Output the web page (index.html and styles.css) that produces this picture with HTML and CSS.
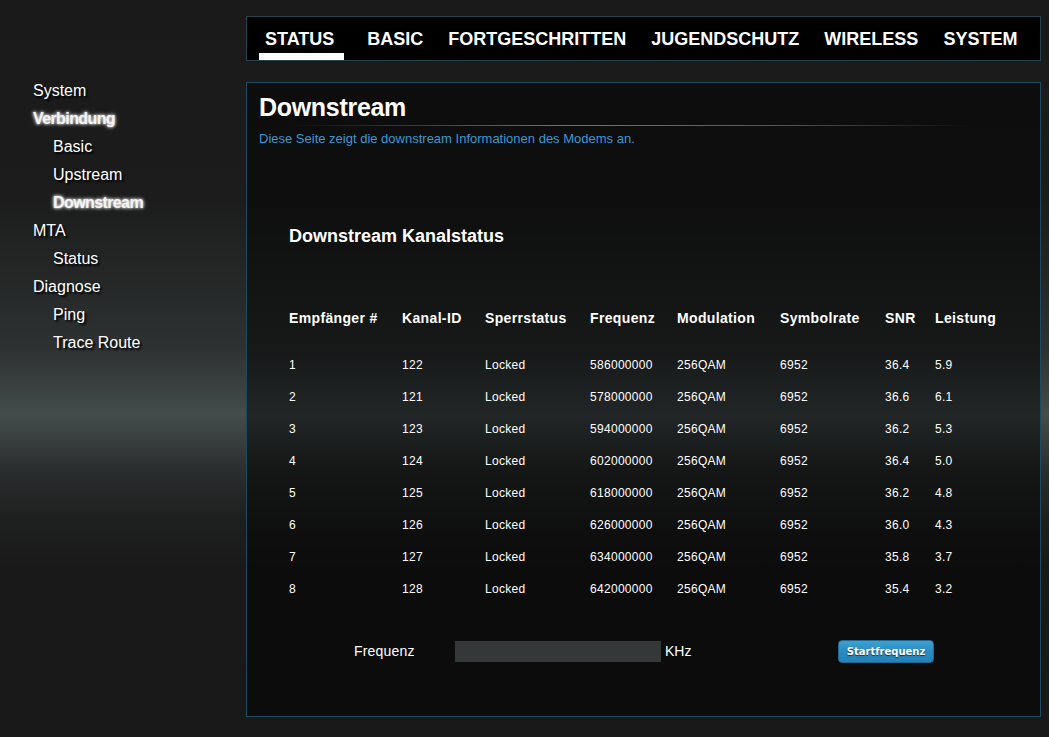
FILE: index.html
```html
<!DOCTYPE html>
<html lang="de">
<head>
<meta charset="utf-8">
<title>Downstream</title>
<link rel="stylesheet" href="styles.css">
</head>
<body>
<div class="page">
  <aside class="sidebar">
    <ul class="menu">
      <li class="lvl1">System</li>
      <li class="lvl1 active">Verbindung</li>
      <li class="lvl2">Basic</li>
      <li class="lvl2">Upstream</li>
      <li class="lvl2 active">Downstream</li>
      <li class="lvl1">MTA</li>
      <li class="lvl2">Status</li>
      <li class="lvl1">Diagnose</li>
      <li class="lvl2">Ping</li>
      <li class="lvl2">Trace Route</li>
    </ul>
  </aside>
  <main class="main">
    <nav class="topnav">
      <span class="tab current">STATUS</span>
      <span class="tab">BASIC</span>
      <span class="tab">FORTGESCHRITTEN</span>
      <span class="tab">JUGENDSCHUTZ</span>
      <span class="tab">WIRELESS</span>
      <span class="tab">SYSTEM</span>
    </nav>
    <section class="panel">
      <h1 class="title">Downstream</h1>
      <div class="rule"></div>
      <p class="desc">Diese Seite zeigt die downstream Informationen des Modems an.</p>
      <h2 class="subtitle">Downstream Kanalstatus</h2>
      <table class="chan">
        <thead>
          <tr><th>Empfänger #</th><th>Kanal-ID</th><th>Sperrstatus</th><th>Frequenz</th><th>Modulation</th><th>Symbolrate</th><th>SNR</th><th>Leistung</th></tr>
        </thead>
        <tbody>
          <tr><td>1</td><td>122</td><td>Locked</td><td>586000000</td><td>256QAM</td><td>6952</td><td>36.4</td><td>5.9</td></tr>
          <tr><td>2</td><td>121</td><td>Locked</td><td>578000000</td><td>256QAM</td><td>6952</td><td>36.6</td><td>6.1</td></tr>
          <tr><td>3</td><td>123</td><td>Locked</td><td>594000000</td><td>256QAM</td><td>6952</td><td>36.2</td><td>5.3</td></tr>
          <tr><td>4</td><td>124</td><td>Locked</td><td>602000000</td><td>256QAM</td><td>6952</td><td>36.4</td><td>5.0</td></tr>
          <tr><td>5</td><td>125</td><td>Locked</td><td>618000000</td><td>256QAM</td><td>6952</td><td>36.2</td><td>4.8</td></tr>
          <tr><td>6</td><td>126</td><td>Locked</td><td>626000000</td><td>256QAM</td><td>6952</td><td>36.0</td><td>4.3</td></tr>
          <tr><td>7</td><td>127</td><td>Locked</td><td>634000000</td><td>256QAM</td><td>6952</td><td>35.8</td><td>3.7</td></tr>
          <tr><td>8</td><td>128</td><td>Locked</td><td>642000000</td><td>256QAM</td><td>6952</td><td>35.4</td><td>3.2</td></tr>
        </tbody>
      </table>
      <div class="freqrow">
        <span class="flabel">Frequenz</span>
        <span class="finput"></span>
        <span class="funit">KHz</span>
        <button class="btn">Startfrequenz</button>
      </div>
    </section>
  </main>
</div>
</body>
</html>
```

FILE: styles.css
```css
html, body {
  margin: 0;
  padding: 0;
}
body {
  width: 1049px;
  height: 737px;
  overflow: hidden;
  font-family: "Liberation Sans", Arial, sans-serif;
  color: #fff;
  background: linear-gradient(to bottom,
    #1a1a1a 0px,
    #1c1c1c 200px,
    #2e3232 350px,
    #444c4c 415px,
    #2b2e2e 470px,
    #1e1f1f 520px,
    #1a1919 570px,
    #191818 737px);
}
.page {
  display: flex;
}
.sidebar {
  width: 246px;
  flex: none;
}
.menu {
  list-style: none;
  margin: 77px 0 0 0;
  padding: 0;
}
.menu li {
  font-size: 16px;
  line-height: 28px;
  height: 28px;
  color: #fff;
  text-shadow: 2px 2px 2px #000;
}
.menu .lvl1 { padding-left: 33px; }
.menu .lvl2 { padding-left: 53px; }
.menu .active {
  font-weight: bold;
  letter-spacing: -0.6px;
  color: #f4f4f4;
  text-shadow: 0 0 3px #fff, 0 0 4px #bbb;
}
.main {
  width: 795px;
  flex: none;
}
.topnav {
  margin-top: 16px;
  height: 43px;
  border: 1px solid #24434f;
  background: #000;
  display: flex;
  gap: 13px;
  padding-left: 12px;
  box-sizing: content-box;
}
.tab {
  font-size: 18px;
  font-weight: bold;
  padding: 12px 6px 0 6px;
  height: 24px;
  line-height: 20px;
  border-bottom: 7px solid transparent;
  letter-spacing: 0;
}
.tab.current {
  border-bottom-color: #fff;
  padding-right: 10px;
  margin-right: 4px;
}
.panel {
  margin-top: 21px;
  height: 633px;
  border: 1px solid #1d4a60;
  background: rgba(0, 0, 0, 0.5);
  padding-left: 12px;
}
.title {
  margin: 10px 0 0 0;
  font-size: 25px;
  line-height: 28px;
  font-weight: bold;
  letter-spacing: -0.3px;
}
.rule {
  margin: 4px 0 0 32px;
  width: 680px;
  height: 1px;
  background: linear-gradient(to right, rgba(60,110,135,0) 0%, #4d7d95 40%, #3a6478 70%, rgba(60,110,135,0) 100%);
}
.desc {
  margin: 5px 0 0 0;
  font-size: 13px;
  line-height: 15px;
  color: #3b97d6;
}
.subtitle {
  margin: 79px 0 0 30px;
  font-size: 18px;
  line-height: 22px;
  font-weight: bold;
}
.chan {
  margin: 61px 0 0 30px;
  border-collapse: collapse;
  table-layout: fixed;
}
.chan th, .chan td {
  padding: 0;
  text-align: left;
  vertical-align: middle;
}
.chan th {
  font-size: 14px;
  font-weight: bold;
  height: 20px;
  padding-bottom: 21px;
  letter-spacing: 0.35px;
}
.chan td {
  font-size: 12px;
  height: 32px;
  letter-spacing: 0.3px;
}
.chan th:nth-child(1) { width: 113px; }
.chan th:nth-child(2) { width: 83px; }
.chan th:nth-child(3) { width: 105px; }
.chan th:nth-child(4) { width: 87px; }
.chan th:nth-child(5) { width: 103px; }
.chan th:nth-child(6) { width: 105px; }
.chan th:nth-child(7) { width: 50px; }
.chan th:nth-child(8) { width: 80px; }
.freqrow {
  margin: 34px 0 0 95px;
  display: flex;
  align-items: center;
  height: 24px;
}
.flabel {
  font-size: 14px;
  width: 101px;
  letter-spacing: 0.2px;
}
.finput {
  width: 206px;
  height: 21px;
  background: #343838;
}
.funit {
  font-size: 14px;
  margin-left: 4px;
  width: 173px;
}
.btn {
  font-family: "DejaVu Sans", "Liberation Sans", sans-serif;
  width: 96px;
  height: 23px;
  border: 1px solid #1c6a93;
  border-radius: 4px;
  background: linear-gradient(to bottom, #3fa0d2 0%, #2b8bc1 50%, #2382b8 100%);
  color: #fff;
  font-size: 10px;
  font-weight: bold;
  padding: 0;
  text-shadow: 0 1px 1px #0b3550;
  box-shadow: 0 1px 2px rgba(0,0,0,0.6);
}
```
